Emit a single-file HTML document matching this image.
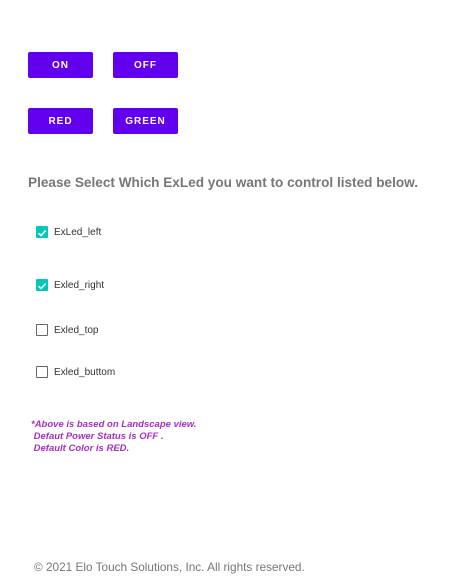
<!DOCTYPE html><html><head><style>
body{margin:0;width:455px;height:580px;background:#fff;font-family:"Liberation Sans",sans-serif;position:relative;overflow:hidden}
.b{position:absolute;width:65px;height:26px;background:#6200ee;border-radius:2px;color:#fff;font-size:10px;font-weight:bold;letter-spacing:1px;text-align:center;line-height:28px}
.t{position:absolute;left:28px;top:175px;font-size:13.6px;font-weight:bold;color:#777}
.cb{position:absolute;left:36px;width:12px;height:12px;box-sizing:border-box;border:1.5px solid #666;border-radius:1px}
.cb.on{background:#03c8b8;border:none}
.l{position:absolute;left:54px;font-size:10px;color:#333}
.n{position:absolute;left:31px;top:419px;font-size:9.5px;font-weight:bold;font-style:italic;color:#a52fc4;line-height:12px}
.f{position:absolute;left:34px;top:560px;font-size:11.8px;color:#777}
</style></head><body>
<div class="b" style="left:28px;top:52px">ON</div>
<div class="b" style="left:113px;top:52px">OFF</div>
<div class="b" style="left:28px;top:108px">RED</div>
<div class="b" style="left:113px;top:108px">GREEN</div>
<div class="t">Please Select Which ExLed you want to control listed below.</div>
<div class="cb on" style="top:226px"><svg width="12" height="12"><path d="M2.5 6.2L5 8.6 9.6 3.6" stroke="#fff" stroke-width="1.6" fill="none"/></svg></div><div class="l" style="top:227px">ExLed_left</div>
<div class="cb on" style="top:279px"><svg width="12" height="12"><path d="M2.5 6.2L5 8.6 9.6 3.6" stroke="#fff" stroke-width="1.6" fill="none"/></svg></div><div class="l" style="top:280px">Exled_right</div>
<div class="cb" style="top:324px"></div><div class="l" style="top:325px">Exled_top</div>
<div class="cb" style="top:366px"></div><div class="l" style="top:367px">Exled_buttom</div>
<div class="n">*Above is based on Landscape view.<br>&nbsp;Defaut Power Status is OFF .<br>&nbsp;Default Color is RED.</div>
<div class="f">© 2021 Elo Touch Solutions, Inc. All rights reserved.</div>
</body></html>
